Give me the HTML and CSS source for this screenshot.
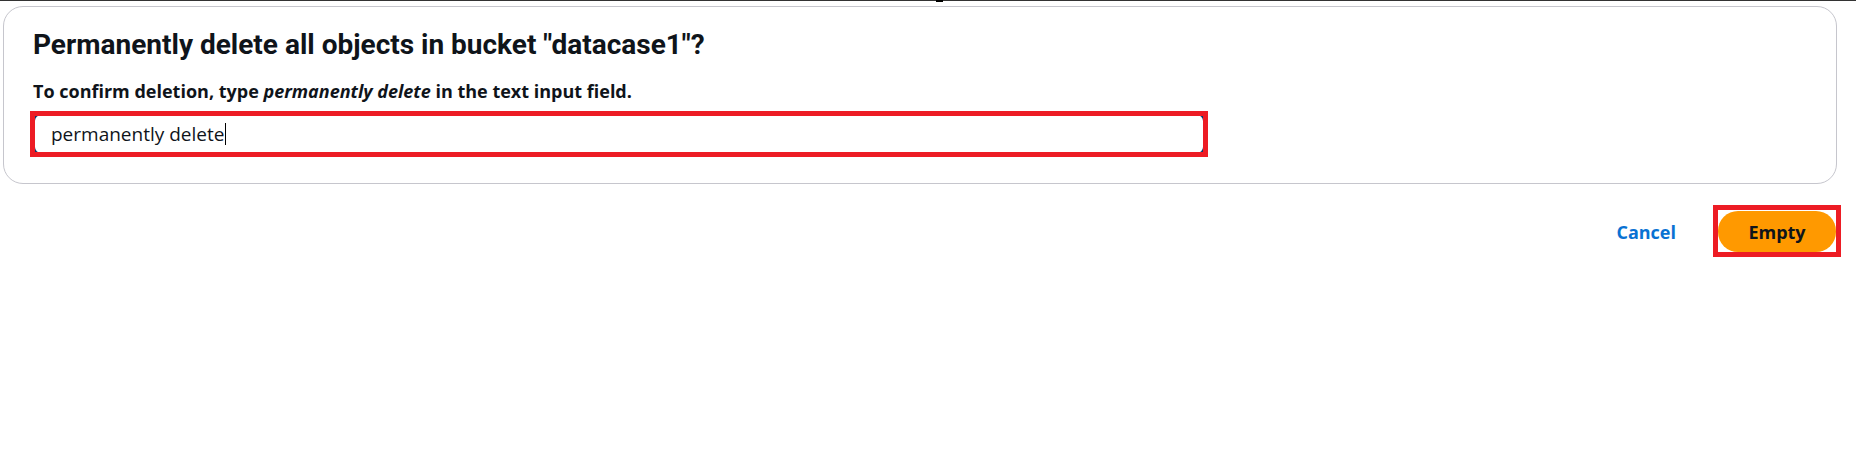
FILE: index.html
```html
<!DOCTYPE html>
<html lang="en">
<head>
<meta charset="utf-8">
<title>Empty bucket</title>
<link rel="stylesheet" href="styles.css">
</head>
<body>
<div class="topbar"><span class="topbar-mark"></span></div>
<section class="card">
  <h2 class="title">Permanently delete all objects in bucket "datacase1"?</h2>
  <p class="hint">To confirm deletion, type <em>permanently delete</em> in the text input field.</p>
  <div class="field annotated">
    <div class="input">permanently delete<span class="caret"></span></div>
  </div>
</section>
<div class="actions">
  <button class="btn-link" type="button">Cancel</button>
  <div class="annotated annotated-btn">
    <button class="btn-primary" type="button">Empty</button>
  </div>
</div>
</body>
</html>
```

FILE: styles.css
```css
* { box-sizing: border-box; }
html, body { margin: 0; padding: 0; background: #ffffff; }
body {
  font-family: "Open Sans", Roboto, Arial, sans-serif;
  color: #0f141a;
  width: 1856px;
  height: 452px;
  overflow: hidden;
}
.topbar {
  height: 1px;
  background: #333333;
  display: flex;
}
.topbar-mark {
  display: block;
  margin-left: 936px;
  width: 7px;
  height: 2px;
  background: #000000;
}
.card {
  margin: 5px 0 0 3px;
  width: 1834px;
  border: 1px solid #c6c6cd;
  border-radius: 20px;
  padding: 21px 29px 28px 29px;
}
.title {
  margin: 0;
  font-family: Roboto, "Open Sans", Arial, sans-serif;
  font-size: 28px;
  line-height: 34px;
  font-weight: 700;
  color: #0f141a;
}
.hint {
  margin: 18px 0 0 0;
  font-size: 18px;
  line-height: 22px;
  font-weight: 700;
  color: #0f141a;
}
.hint em { font-style: italic; }
.field {
  margin-top: 11px;
  width: 1172px;
}
.annotated { position: relative; }
.annotated::after {
  content: "";
  position: absolute;
  left: -3px;
  right: -3px;
  top: -2px;
  bottom: -2px;
  border: 5px solid #ed1c24;
  pointer-events: none;
}
.input {
  height: 42px;
  border: 2px solid #0b3a6e;
  border-radius: 8px;
  padding: 8px 16px 8px 16px;
  font-size: 19px;
  line-height: 22px;
  color: #0f141a;
  display: flex;
  align-items: center;
}
.caret {
  display: inline-block;
  width: 1px;
  height: 22px;
  background: #000000;
  margin-left: 1px;
}
.actions {
  display: flex;
  justify-content: flex-end;
  align-items: center;
  gap: 22px;
  margin-top: 27px;
  width: 1836px;
}
.btn-link {
  background: none;
  border: none;
  padding: 0 20px;
  font-family: inherit;
  font-size: 18px;
  font-weight: 700;
  color: #0972d3;
  line-height: 22px;
}
.annotated-btn::after {
  left: -5px;
  right: -5px;
  top: -6px;
  bottom: -5px;
}
.btn-primary {
  display: block;
  width: 118px;
  height: 41px;
  border: none;
  border-radius: 20px;
  background: #ff9900;
  color: #0f141a;
  font-family: inherit;
  font-size: 18px;
  font-weight: 700;
  padding: 0;
}
```
